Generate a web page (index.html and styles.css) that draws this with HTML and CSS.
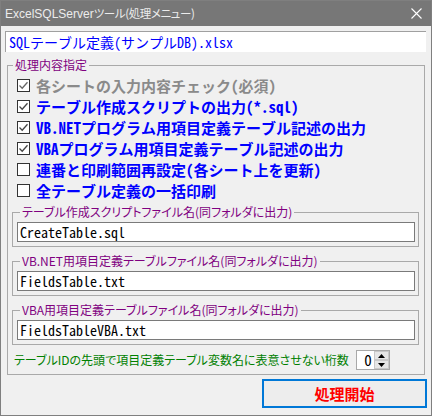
FILE: index.html
```html
<!DOCTYPE html>
<html lang="ja">
<head>
<meta charset="utf-8">
<title>ExcelSQLServerツール(処理メニュー)</title>
<link rel="stylesheet" href="styles.css">
</head>
<body>
<div class="window">
  <div class="titlebar">
    <span class="title">ExcelSQLServer<span class="title-ja">ツール(処理メニュー)</span></span>
    <svg class="close" width="11" height="11" viewBox="0 0 11 11"><path d="M0.5 0.5 L10.5 10.5 M10.5 0.5 L0.5 10.5" stroke="#ffffff" stroke-width="1.1" fill="none"/></svg>
  </div>
  <div class="client">
    <div class="filebox">SQLテーブル定義(サンプルDB).xlsx</div>
    <fieldset class="group main">
      <legend>処理内容指定</legend>
      <div class="check disabled"><span class="box"><svg width="11" height="11" viewBox="0 0 11 11"><path d="M1.5 5.5 L4.2 8.2 L9.5 2.2" stroke="#666" stroke-width="1.3" fill="none"/></svg></span><span class="lbl">各シートの入力内容チェック(必須)</span></div>
      <div class="check"><span class="box"><svg width="11" height="11" viewBox="0 0 11 11"><path d="M1.5 5.5 L4.2 8.2 L9.5 2.2" stroke="#444" stroke-width="1.3" fill="none"/></svg></span><span class="lbl">テーブル作成スクリプトの出力(*.sql)</span></div>
      <div class="check"><span class="box"><svg width="11" height="11" viewBox="0 0 11 11"><path d="M1.5 5.5 L4.2 8.2 L9.5 2.2" stroke="#444" stroke-width="1.3" fill="none"/></svg></span><span class="lbl">VB.NETプログラム用項目定義テーブル記述の出力</span></div>
      <div class="check"><span class="box"><svg width="11" height="11" viewBox="0 0 11 11"><path d="M1.5 5.5 L4.2 8.2 L9.5 2.2" stroke="#444" stroke-width="1.3" fill="none"/></svg></span><span class="lbl">VBAプログラム用項目定義テーブル記述の出力</span></div>
      <div class="check"><span class="box"></span><span class="lbl">連番と印刷範囲再設定(各シート上を更新)</span></div>
      <div class="check"><span class="box"></span><span class="lbl">全テーブル定義の一括印刷</span></div>

      <fieldset class="group sub first">
        <legend>テーブル作成スクリプトファイル名(同フォルダに出力)</legend>
        <div class="tbox">CreateTable.sql</div>
      </fieldset>
      <fieldset class="group sub">
        <legend>VB.NET用項目定義テーブルファイル名(同フォルダに出力)</legend>
        <div class="tbox">FieldsTable.txt</div>
      </fieldset>
      <fieldset class="group sub">
        <legend>VBA用項目定義テーブルファイル名(同フォルダに出力)</legend>
        <div class="tbox">FieldsTableVBA.txt</div>
      </fieldset>

      <div class="digits">
        <span class="digits-label">テーブルIDの先頭で項目定義テーブル変数名に表意させない桁数</span>
        <div class="spin">
          <span class="spin-value">0</span>
          <div class="spin-buttons">
            <span class="spin-btn"><svg width="7" height="4" viewBox="0 0 7 4"><path d="M0 4 L3.5 0 L7 4 Z" fill="#000"/></svg></span>
            <span class="spin-btn"><svg width="7" height="4" viewBox="0 0 7 4"><path d="M0 0 L3.5 4 L7 0 Z" fill="#000"/></svg></span>
          </div>
        </div>
      </div>
    </fieldset>
    <div class="actions">
      <button class="run" type="button">処理開始</button>
    </div>
  </div>
</div>
</body>
</html>
```
FILE: styles.css
```css
html, body {
  margin: 0;
  padding: 0;
}
body {
  width: 432px;
  height: 416px;
  overflow: hidden;
  background: #f0f0f0;
}
.window {
  box-sizing: border-box;
  width: 432px;
  height: 416px;
  border: 1px solid #7f7f7f;
  background: #f0f0f0;
}
.titlebar {
  height: 25px;
  background: #777777;
  display: flex;
  align-items: center;
  justify-content: space-between;
  padding: 0 9px 0 4px;
}
.title {
  font-family: "Liberation Sans", "Noto Sans CJK JP", sans-serif;
  font-size: 12px;
  color: #ececec;
  line-height: 16px;
  white-space: nowrap;
}
.title-ja {
  font-family: "Noto Sans CJK JP", sans-serif;
  font-size: 11.5px;
  font-feature-settings: "palt";
  letter-spacing: -0.4px;
}
.close {
  display: block;
}
.client {
  padding: 5px 5px 0 4px;
}
.filebox {
  box-sizing: border-box;
  height: 21px;
  background: #ffffff;
  border-top: 1px solid #a0a0a0;
  border-left: 1px solid #a0a0a0;
  padding-left: 3px;
  font-family: "Noto Sans Mono CJK JP", "Noto Sans CJK JP", monospace;
  font-size: 14px;
  line-height: 20px;
  color: #0000ff;
  white-space: nowrap;
}
.group {
  border: 1px solid #a9a9a9;
  min-width: 0;
}
.group legend {
  font-family: "Noto Sans CJK JP", sans-serif;
  font-size: 12px;
  font-feature-settings: "palt";
  line-height: 16px;
  color: #800080;
  padding: 0 2px;
  white-space: nowrap;
}
.main {
  margin: 5px 1px 0 2px;
  padding: 2px 5px 4px 4px;
}
.main > legend {
  margin-left: 1px;
}
.check {
  display: flex;
  align-items: center;
  gap: 6px;
  height: 21px;
  margin-left: 5px;
}
.box {
  box-sizing: border-box;
  width: 13px;
  height: 13px;
  border: 1px solid #333333;
  background: #ffffff;
  display: flex;
  align-items: center;
  justify-content: center;
  flex: none;
}
.box svg {
  display: block;
}
.lbl {
  font-family: "Noto Sans Mono CJK JP", "Noto Sans CJK JP", monospace;
  font-size: 15px;
  font-weight: bold;
  line-height: 18px;
  color: #0000ff;
  white-space: nowrap;
}
.check.disabled .lbl {
  color: #8a8a8a;
}
.sub {
  margin: 6px 0 0 0;
  padding: 2px 3px 4px 4px;
}
.sub.first {
  margin-top: 3px;
}
.sub > legend {
  margin-left: 3px;
}
.tbox {
  box-sizing: border-box;
  height: 20px;
  background: #ffffff;
  border: 1px solid #7a7a7a;
  padding-left: 2px;
  font-family: "Noto Sans Mono CJK JP", "Noto Sans CJK JP", monospace;
  font-size: 14px;
  line-height: 18px;
  color: #000000;
  white-space: nowrap;
}
.digits {
  display: flex;
  align-items: center;
  margin: 5px 0 0 2px;
  height: 20px;
}
.digits-label {
  font-family: "Noto Sans CJK JP", sans-serif;
  font-size: 12px;
  font-feature-settings: "palt";
  color: #008000;
  white-space: nowrap;
  line-height: 16px;
}
.spin {
  box-sizing: border-box;
  width: 34px;
  height: 20px;
  margin-left: 7px;
  border: 1px solid #a9a9a9;
  background: #ffffff;
  display: flex;
  align-items: stretch;
}
.spin-value {
  flex: 1;
  text-align: right;
  padding-right: 2px;
  font-family: "Noto Sans Mono CJK JP", "Noto Sans CJK JP", monospace;
  font-size: 15px;
  line-height: 18px;
  color: #000;
}
.spin-buttons {
  width: 15px;
  display: flex;
  flex-direction: column;
}
.spin-btn {
  flex: 1;
  box-sizing: border-box;
  background: #e6e6e6;
  border: 1px solid #c8c8c8;
  display: flex;
  align-items: center;
  justify-content: center;
}
.spin-btn svg {
  display: block;
}
.actions {
  display: flex;
  justify-content: flex-end;
  margin: 4px -1px 0 0;
}
.run {
  box-sizing: border-box;
  width: 165px;
  height: 29px;
  border: 2px solid #0078d7;
  background: #ededed;
  font-family: "Noto Sans Mono CJK JP", "Noto Sans CJK JP", monospace;
  font-size: 15px;
  font-weight: bold;
  color: #ff0000;
  padding: 0;
  line-height: 20px;
}
```
